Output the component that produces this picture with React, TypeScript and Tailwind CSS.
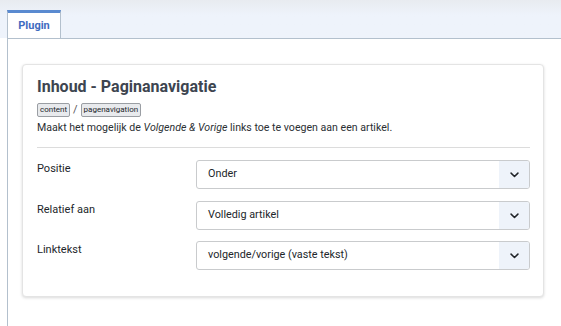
const fields = [
  { label: "Positie", value: "Onder" },
  { label: "Relatief aan", value: "Volledig artikel" },
  { label: "Linktekst", value: "volgende/vorige (vaste tekst)" },
];

function Chevron() {
  return (
    <svg width="11" height="11" viewBox="0 0 16 16" fill="none">
      <path d="M3 6l5 5 5-5" stroke="#212529" strokeWidth="2.2" strokeLinecap="round" strokeLinejoin="round" />
    </svg>
  );
}

export default function App() {
  return (
    <div className="h-[326px] w-[561px] overflow-hidden bg-white font-['Roboto',sans-serif] text-[#22262a]">
      <div className="flex h-[38px] items-end bg-gradient-to-b from-[#e8ebf0] to-[#eef3fb] to-40% pl-[7px]">
        <div className="flex h-[28px] w-[54px] items-center justify-center border-x border-t-[3px] border-[#b3c0cd] border-t-[#5a8ad0] bg-white pt-[1px] text-[11px] font-bold text-[#3f6bc0]">
          Plugin
        </div>
      </div>
      <div className="ml-[7px] h-[288px] border-l border-t border-[#b3c0cd] bg-white pl-[14px] pr-[17px] pt-[25px]">
        <div className="rounded-[4px] border border-[#e4e4e4] bg-white pb-[26px] pl-[14px] pr-[13px] pt-[12px] shadow-[0_1px_3px_rgba(0,0,0,0.15)]">
          <h1 className="text-[16px] font-bold leading-[20px] text-[#3d4550]">Inhoud - Paginanavigatie</h1>
          <div className="mt-[6px] flex h-[14px] items-center gap-[3px] text-[11px] leading-[14px]">
            <span className="rounded-[2px] border border-[#9a9ea3] bg-[#e8eaed] px-[2px] text-[8px] leading-[12px] text-[#22262a]">content</span>
            <span className="text-[#555]">/</span>
            <span className="rounded-[2px] border border-[#9a9ea3] bg-[#e8eaed] px-[2px] text-[8px] leading-[12px] text-[#22262a]">pagenavigation</span>
          </div>
          <p className="mt-[3px] text-[10.6px] leading-[16px] text-[#2b2f33]">
            Maakt het mogelijk de <em>Volgende &amp; Vorige</em> links toe te voegen aan een artikel.
          </p>
          <div className="mt-[11px] border-t border-[#dcdcdc]" />
          <div className="mt-[12px] flex flex-col gap-[11.5px]">
            {fields.map((f) => (
              <div key={f.label} className="flex items-start">
                <div className="w-[159px] pt-[1px] text-[11px] leading-[16px] text-[#22262a]">{f.label}</div>
                <div className="flex h-[29px] flex-1 items-stretch overflow-hidden rounded-[3px] border border-[#c9cbcd] bg-white">
                  <div className="flex flex-1 items-center pl-[11px] text-[10.8px] text-[#22262a]">{f.value}</div>
                  <div className="flex w-[30px] items-center justify-center bg-[#eef3fa]">
                    <Chevron />
                  </div>
                </div>
              </div>
            ))}
          </div>
        </div>
      </div>
    </div>
  );
}
